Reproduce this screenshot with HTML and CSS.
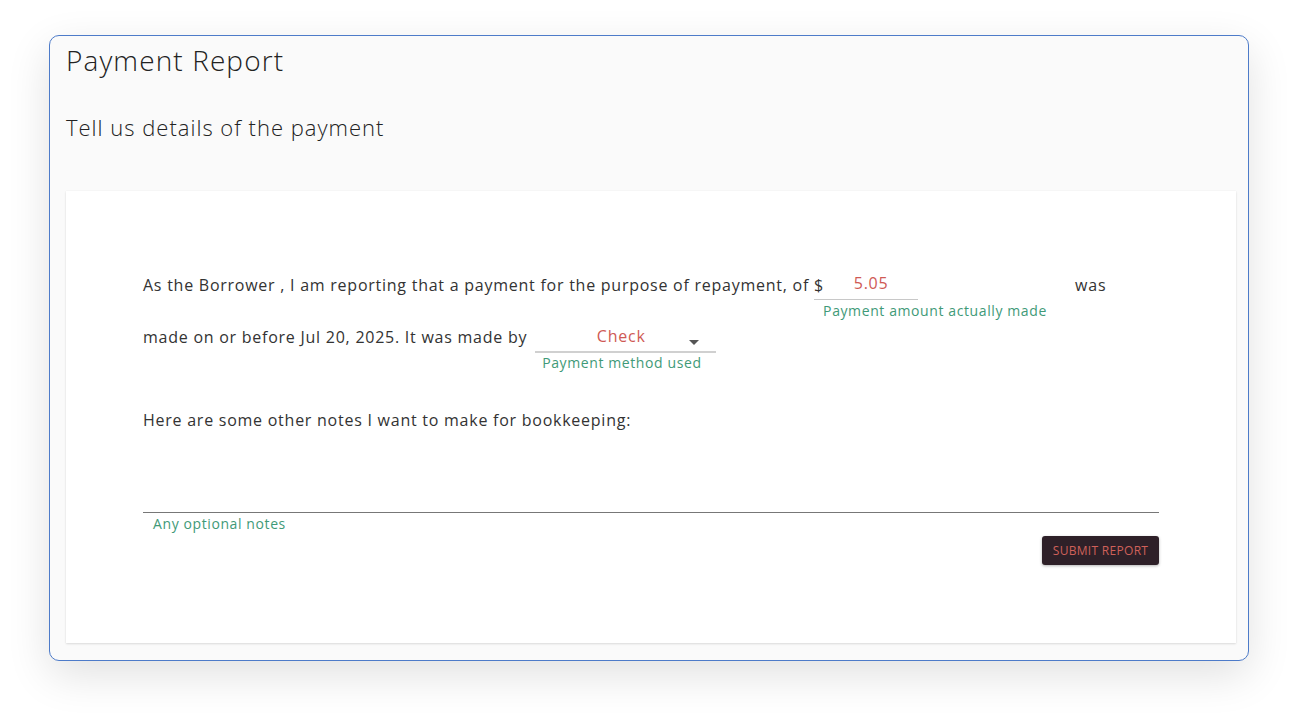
FILE: index.html
```html
<!DOCTYPE html>
<html lang="en">
<head>
	<meta charset="UTF-8">
	<title>Payment Report</title>
	<link rel="stylesheet" href="styles.css">
</head>
<body>
	<div class="frame">
		<h1 class="title">Payment Report</h1>
		<h2 class="subtitle">Tell us details of the payment</h2>
		<div class="card">
			<div class="line line-1">
				<span class="txt">As the Borrower , I am reporting that a payment for the purpose of repayment, of</span>
				<div class="field field-amount">
					<div class="input">
						<span class="prefix">$</span>
						<span class="value">5.05</span>
					</div>
					<div class="helper">Payment amount actually made</div>
				</div>
				<span class="txt txt-was">was</span>
			</div>
			<div class="line line-2">
				<span class="txt">made on or before Jul 20, 2025. It was made by</span>
				<div class="field field-method">
					<div class="input select">
						<span class="value">Check</span>
						<span class="caret"></span>
					</div>
					<div class="helper">Payment method used</div>
				</div>
			</div>
			<p class="notes-label">Here are some other notes I want to make for bookkeeping:</p>
			<div class="notes">
				<div class="notes-input"></div>
				<div class="helper">Any optional notes</div>
			</div>
			<div class="actions">
				<button class="btn">Submit Report</button>
			</div>
		</div>
	</div>
</body>
</html>
```

FILE: styles.css
```css
*{
	margin: 0;
	padding: 0;
	box-sizing: border-box;
}
body{
	padding: 35px 49px 63px;
	background-color: #fff;
	font-family: "Open Sans", "Liberation Sans", sans-serif;
	color: #333;
}
.frame{
	height: 626px;
	padding: 0 12px 0 16px;
	border: 1px solid #4d7bc9;
	border-radius: 10px;
	background-color: #fafafa;
	box-shadow: 0 14px 44px rgba(0,0,0,.12);
}
.title{
	padding-top: 4px;
	font-size: 28px;
	font-weight: 300;
	line-height: 40px;
	letter-spacing: 1.1px;
	color: #222;
}
.subtitle{
	margin-top: 32px;
	font-size: 22px;
	font-weight: 300;
	line-height: 30px;
	letter-spacing: 1px;
	color: #222;
}
.card{
	height: 452px;
	margin-top: 49px;
	padding: 0 77px;
	background-color: #fff;
	box-shadow: 0 1px 2px rgba(0,0,0,.12), 0 0 1px rgba(0,0,0,.06);
}
.line{
	display: flex;
	align-items: flex-start;
	font-size: 16px;
	line-height: 24px;
	letter-spacing: .75px;
}
.line-1{
	padding-top: 82px;
}
.line-2{
	margin-top: 4px;
}
.field{
	display: flex;
	flex-direction: column;
}
.input{
	display: flex;
	align-items: center;
	height: 28px;
	border-bottom: 1px solid #c8c8c8;
}
.value{
	flex: 1;
	text-align: center;
	color: #cf5a55;
}
.helper{
	margin-top: 2px;
	font-size: 14px;
	line-height: 20px;
	letter-spacing: .6px;
	color: #3f9a78;
	white-space: nowrap;
}
.field-amount{
	width: 104px;
	margin-left: 5px;
}
.field-amount .input{
	margin-top: -3px;
	height: 30px;
}
.field-amount .value{
	margin-top: -3px;
}
.field-amount .helper{
	padding-left: 9px;
	margin-top: 1px;
}
.txt-was{
	margin-left: 157px;
}
.field-method{
	width: 181px;
	margin-left: 8px;
}
.select{
	border-bottom: 2px solid #d0d0d0;
	padding: 0 17px 0 18px;
}
.select .value{
	margin-top: -4px;
}
.caret{
	width: 0;
	height: 0;
	margin-top: 8px;
	border-left: 5px solid transparent;
	border-right: 5px solid transparent;
	border-top: 5px solid #555;
}
.field-method .helper{
	padding-left: 7px;
	margin-top: 0;
}
.notes-label{
	margin-top: 35px;
	font-size: 16px;
	line-height: 24px;
	letter-spacing: .75px;
}
.notes{
	margin-top: 80px;
}
.notes-input{
	border-bottom: 1px solid #777;
}
.notes .helper{
	padding-left: 10px;
	margin-top: 1px;
}
.actions{
	display: flex;
	justify-content: flex-end;
	margin-top: 2px;
}
.btn{
	width: 117px;
	height: 29px;
	border: none;
	border-radius: 3px;
	background-color: #2e2028;
	color: #d0605a;
	font-family: inherit;
	font-size: 12px;
	font-weight: 500;
	letter-spacing: .3px;
	text-transform: uppercase;
	box-shadow: 0 1px 3px rgba(0,0,0,.3);
}
```
